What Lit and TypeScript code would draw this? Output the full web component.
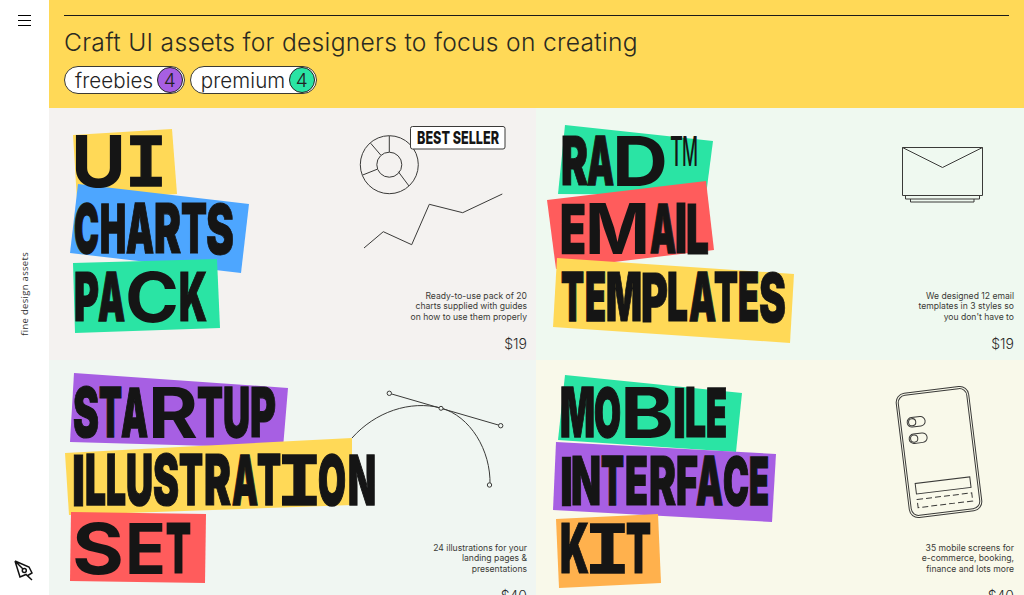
import { LitElement, html, css, svg } from "lit";
import { customElement } from "lit/decorators.js";

type Letter = [string, number, number];
interface Line { top: number; bottom: number; letters: Letter[]; light?: boolean }
interface Card {
  x: number; y: number; w: number; h: number; bg: string;
  bands: [string, string][];
  lines: Line[];
  art: unknown;
  desc: string[];
  price: string;
}

const Y = "#ffd957", B = "#4da6ff", G = "#2ae4a4", P = "#a75fe3", R = "#ff5c5c", O = "#ffb14d";
const line = "#3a3a38";

const natural: Record<string, number> = {
  A: 0.78, B: 0.7, C: 0.76, D: 0.73, E: 0.6, F: 0.58, H: 0.76, I: 0.3, K: 0.74, L: 0.55,
  M: 0.94, N: 0.78, O: 0.8, P: 0.67, R: 0.69, S: 0.67, T: 0.65, U: 0.74,
};

const letter = (l: Letter, ln: Line) => {
  const [ch, x0, x1] = l;
  const h = ln.bottom - ln.top;
  if (ch === "I*") {
    const pad = (x1 - x0) * 0.14;
    return svg`<text class="slab" x=${x0 - pad} y=${ln.bottom - 0.7} font-size=${(h - 1.5) / 0.66} textLength=${x1 - x0 + 2 * pad} lengthAdjust="spacingAndGlyphs">I</text>`;
  }
  const fs = h / 0.727;
  if (ln.light) {
    return svg`<text class="light" x=${x0} y=${ln.bottom} font-size=${fs} textLength=${x1 - x0} lengthAdjust="spacingAndGlyphs">${ch}</text>`;
  }
  const scale = (x1 - x0) / (natural[ch] * fs);
  const weight = Math.round(Math.max(650, Math.min(900, 900 - (scale - 0.62) * 500)));
  const stroke = Math.max(0, Math.min(1.6, (0.72 - scale) * 7));
  return svg`<text class="heavy" x=${x0} y=${ln.bottom - stroke / 2} font-size=${(h - stroke) / 0.727} font-weight=${weight} stroke-width=${stroke} textLength=${x1 - x0} lengthAdjust="spacingAndGlyphs">${ch}</text>`;
};

const cards: Card[] = [
  {
    x: 49, y: 108, w: 487, h: 252, bg: "#f4f2f0",
    bands: [
      [Y, "73,135 172,129 177,194 77,200"],
      [B, "78,184 249,204 241,273 70,253"],
      [G, "73,263 217,259 220,328 75,333"],
    ],
    lines: [
      { top: 135, bottom: 187, letters: [["U", 71, 126], ["I*", 130, 162]] },
      { top: 203, bottom: 254, letters: [["C", 74, 99], ["H", 100, 126], ["A", 126, 154], ["R", 154, 181], ["T", 181, 207], ["S", 206, 234]] },
      { top: 272, bottom: 322, letters: [["P", 74, 99], ["A", 98, 125], ["C", 125, 179], ["K", 179, 207]] },
    ],
    art: svg`
      <g fill="none" stroke=${line} stroke-width="1">
        <circle cx="389.3" cy="164.7" r="29"/>
        <circle cx="389.3" cy="164.7" r="12.5"/>
        <path d="M389.3 136V152M370.7 143.3L380.7 155M362.7 175L377 169.3M398.3 171.7L409 186"/>
        <path d="M364 248L383.3 231.7L411.7 244.7L429.3 204.3L462.7 212.7L502.3 194"/>
      </g>
      <rect x="410.5" y="126.5" width="94.5" height="22.5" rx="2" fill="#fff" stroke=${line}/>
      <text class="tag" x="417" y="144" textLength="82" lengthAdjust="spacingAndGlyphs">BEST SELLER</text>
    `,
    desc: ["Ready-to-use pack of 20", "charts supplied with guides", "on how to use them properly"],
    price: "$19",
  },
  {
    x: 536, y: 108, w: 488, h: 252, bg: "#eff9f0",
    bands: [
      [G, "565,125 713,141 706,195 558,194"],
      [R, "547,200 706,181 714,250 556,269"],
      [Y, "557,258 794,274 790,343 553,327"],
    ],
    lines: [
      { top: 136, bottom: 186, letters: [["R", 561, 588], ["A", 587, 614], ["D", 612, 668]] },
      { top: 136, bottom: 166, light: true, letters: [["T", 670, 683], ["M", 682, 698]] },
      { top: 203, bottom: 254, letters: [["E", 560, 586], ["M", 585, 650], ["A", 650, 676], ["I", 675, 687], ["L", 686, 709]] },
      { top: 272, bottom: 322, letters: [["T", 561, 584], ["E", 585, 606], ["M", 606, 642], ["P", 641, 668], ["L", 667, 688], ["A", 689, 716], ["T", 714, 738], ["E", 738, 759], ["S", 759, 786]] },
    ],
    art: svg`
      <g fill="none" stroke=${line} stroke-width="1">
        <path d="M902.5 147.5H982.5V195.5H902.5ZM902.5 147.5L942.5 167.5L982.5 147.5"/>
        <path d="M905.5 195.5V199H979.5V195.5M910.5 199V202H974V199"/>
      </g>
    `,
    desc: ["We designed 12 email", "templates in 3 styles so", "you don't have to"],
    price: "$19",
  },
  {
    x: 49, y: 360, w: 487, h: 252, bg: "#f0f6f2",
    bands: [
      [P, "74,373 288,388 283,448 70,442"],
      [Y, "65,453 352,438 352,505 69,515"],
      [R, "71,512 206,514 205,583 70,581"],
    ],
    lines: [
      { top: 387, bottom: 438, letters: [["S", 73, 99], ["T", 99, 122], ["A", 121, 148], ["R", 148, 198], ["T", 197, 223], ["U", 223, 250], ["P", 250, 276]] },
      { top: 454, bottom: 506, letters: [["I", 72, 85], ["L", 85, 106], ["L", 106, 126], ["U", 126, 153], ["S", 153, 179], ["T", 179, 203], ["R", 204, 231], ["A", 232, 258], ["T", 257, 281], ["I*", 282, 317], ["O", 318, 346], ["N", 348, 376]] },
      { top: 523, bottom: 574, letters: [["S", 72, 124], ["E", 125, 166], ["T", 166, 191]] },
    ],
    art: svg`
      <g fill="none" stroke=${line} stroke-width="1">
        <path d="M352 438C375 412 410 400 441 408C470 416 491 450 490 485"/>
        <path d="M389.3 393.3L500.7 425.7"/>
        <g fill="#f0f6f2">
          <circle cx="389.3" cy="393.3" r="2.2"/>
          <circle cx="441" cy="408.3" r="2"/>
          <circle cx="500.7" cy="425.7" r="2.2"/>
          <circle cx="489.5" cy="485" r="2.2"/>
        </g>
      </g>
    `,
    desc: ["24 illustrations for your", "landing pages &", "presentations"],
    price: "$40",
  },
  {
    x: 536, y: 360, w: 488, h: 252, bg: "#f9f9ea",
    bands: [
      [G, "565,375 742,393 736,452 558,440"],
      [P, "556,442 776,454 772,522 553,510"],
      [O, "556,519 658,514 661,583 559,588"],
    ],
    lines: [
      { top: 387, bottom: 438, letters: [["M", 560, 595], ["O", 594, 621], ["B", 620, 674], ["I", 673, 686], ["L", 685, 706], ["E", 706, 727]] },
      { top: 456, bottom: 506, letters: [["I", 560, 573], ["N", 571, 601], ["T", 601, 624], ["E", 625, 648], ["R", 649, 676], ["F", 676, 698], ["A", 696, 723], ["C", 723, 749], ["E", 749, 769]] },
      { top: 523, bottom: 574, letters: [["K", 560, 589], ["I*", 590, 625], ["T", 626, 651]] },
    ],
    art: svg`
      <g fill="none" stroke=${line} stroke-width="1" transform="translate(939 452) rotate(-7)">
        <rect x="-36.5" y="-62.5" width="73" height="125" rx="9"/>
        <rect x="-34.5" y="-60.5" width="69" height="121" rx="7.5"/>
        <rect x="-28" y="-37.5" width="18" height="9.5" rx="4.7"/>
        <circle cx="-23" cy="-32.8" r="3.6"/>
        <rect x="-28" y="-21" width="18" height="9.5" rx="4.7"/>
        <circle cx="-23" cy="-16.3" r="3.6"/>
        <rect x="-27.5" y="28.4" width="55" height="10.6"/>
        <rect x="-27.5" y="44.5" width="55" height="8.2" stroke-dasharray="6 3"/>
      </g>
    `,
    desc: ["35 mobile screens for", "e-commerce, booking,", "finance and lots more"],
    price: "$40",
  },
];

@customElement("app-root")
export class AppRoot extends LitElement {
  static styles = css`
    :host { display: block; width: 100%; height: 100vh; overflow: hidden; background: #fff; color: #1b1b1b; font-family: Inter, "Liberation Sans", sans-serif; }
    .page { display: flex; height: 100%; }
    .side { flex: 0 0 49px; display: flex; flex-direction: column; align-items: center; padding: 15px 0 13px; box-sizing: border-box; }
    .burger { display: flex; flex-direction: column; gap: 3.8px; width: 13px; }
    .burger i { display: block; height: 1.2px; background: #000; }
    .vert { writing-mode: vertical-rl; transform: rotate(180deg); font-size: 9.5px; letter-spacing: .3px; color: #333; margin: auto 0; padding-bottom: 2px; font-family: "Open Sans", sans-serif; }
    .nib { display: block; width: 21px; height: 22px; }
    .main { flex: 1; min-width: 0; }
    .head { background: #ffd957; height: 108px; box-sizing: border-box; padding: 15px 15px 0 15px; }
    .rule { height: 1px; background: #1a1a1a; }
    h1 { margin: 11px 0 0; font-size: 24.6px; line-height: 30px; font-weight: 300; letter-spacing: .3px; color: #2a2a22; white-space: nowrap; }
    .pills { display: flex; gap: 5px; margin-top: 9px; }
    .pill { display: flex; align-items: center; gap: 3.5px; height: 28px; box-sizing: border-box; padding: 0 1px 0 10px; background: #fff; border: 1px solid #3b3a33; border-radius: 14px; font-size: 20.5px; font-weight: 300; letter-spacing: .1px; color: #222; }
    .badge { width: 26px; height: 26px; box-sizing: border-box; border-radius: 50%; border: 1px solid #222; display: flex; align-items: center; justify-content: center; font-size: 19px; font-weight: 300; color: #222; }
    .grid { display: grid; grid-template-columns: 487px 488px; grid-auto-rows: 252px; }
    .card { display: grid; overflow: hidden; }
    .card > * { grid-area: 1 / 1; }
    .poster { width: 100%; height: 100%; display: block; overflow: visible; }
    .info { display: flex; flex-direction: column; align-items: flex-end; justify-content: flex-end; text-align: right; padding: 0 9px 8px 0; pointer-events: none; }
    .card:nth-child(even) .info { padding-right: 10px; }
    .desc { font-size: 8.6px; line-height: 10.8px; color: #3a3a36; }
    .desc div { white-space: nowrap; }
    .price { font-size: 14px; line-height: 16px; margin-top: 13px; color: #2a2a2a; font-weight: 300; }
    text.heavy { font-family: Inter, "Liberation Sans", sans-serif; fill: #151515; stroke: #151515; }
    text.light { font-family: Inter, "Liberation Sans", sans-serif; font-weight: 500; fill: #151515; }
    text.slab { font-family: "Liberation Mono", monospace; font-weight: 700; fill: #151515; stroke: #151515; stroke-width: 1.5px; }
    text.tag { font-family: Inter, "Liberation Sans", sans-serif; font-weight: 800; font-size: 18px; fill: #151515; }
  `;

  private pill(label: string, color: string) {
    return html`<div class="pill">${label}<span class="badge" style="background:${color}">4</span></div>`;
  }

  render() {
    return html`
      <div class="page">
        <aside class="side">
          <div class="burger"><i></i><i></i><i></i></div>
          <div class="vert">fine design assets</div>
          <svg class="nib" viewBox="0 0 21 22" fill="none" stroke="#111" stroke-width="1.5">
            <path d="M1 1L6 17L12 14.5L18 20M1 1L15 7L18 13L13 16M1 1L9 9"/>
            <circle cx="10.3" cy="10.6" r="2"/>
          </svg>
        </aside>
        <main class="main">
          <header class="head">
            <div class="rule"></div>
            <h1>Craft UI assets for designers to focus on creating</h1>
            <div class="pills">${this.pill("freebies", P)}${this.pill("premium", G)}</div>
          </header>
          <section class="grid">
            ${cards.map(
              (c) => html`
                <article class="card" style="background:${c.bg}">
                  <svg class="poster" viewBox="${c.x} ${c.y} ${c.w} ${c.h}">
                    ${c.bands.map(([fill, pts]) => svg`<polygon fill=${fill} points=${pts}/>`)}
                    ${c.art}
                    ${c.lines.map((ln) => ln.letters.map((l) => letter(l, ln)))}
                  </svg>
                  <div class="info">
                    <div class="desc">${c.desc.map((d) => html`<div>${d}</div>`)}</div>
                    <div class="price">${c.price}</div>
                  </div>
                </article>
              `
            )}
          </section>
        </main>
      </div>
    `;
  }
}
